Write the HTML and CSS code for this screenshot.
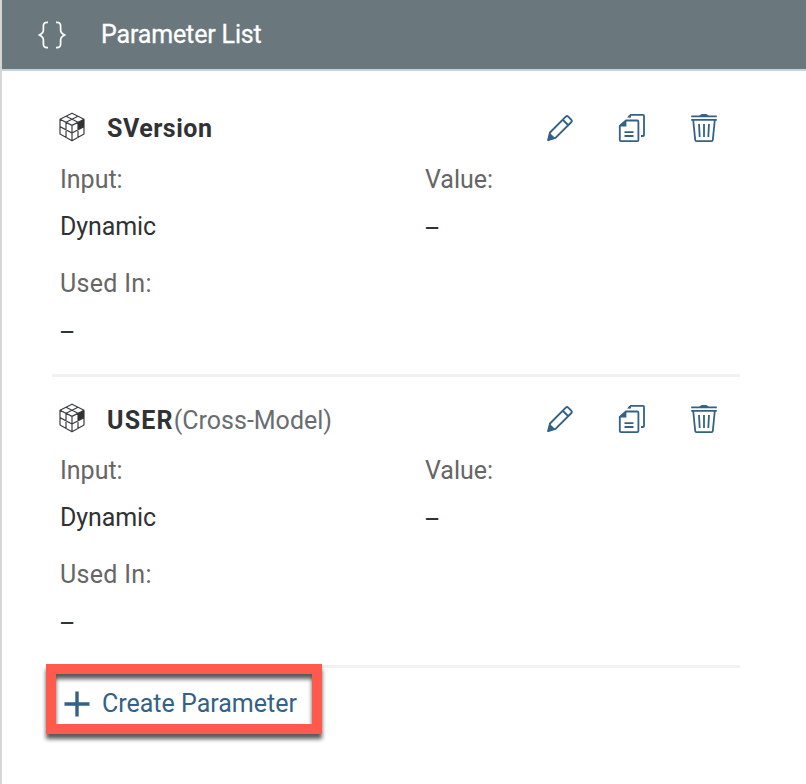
FILE: index.html
```html
<!DOCTYPE html>
<html lang="en">
<head>
<meta charset="utf-8">
<title>Parameter List</title>
<link rel="stylesheet" href="styles.css">
</head>
<body>
<svg class="defs" aria-hidden="true">
  <symbol id="cube" viewBox="0 0 28 30">
    <path d="M14 1.2 26 7.2V22L14 28.8 2 22V7.2ZM2 7.2 14 13.4 26 7.2M14 13.4V28.8M8 4.2 20 10.3V25.4M20 4.2 8 10.3V25.4M2 14.6 14 21 26 14.6" fill="none" stroke="#3c3f40" stroke-width="1.2" stroke-linejoin="round"/>
    <path d="M20 10.4 26 7.4V14.6L20 17.8Z" fill="#303233"/>
  </symbol>
  <symbol id="pencil" viewBox="0 0 28 28">
    <path d="M4 18.5 19.8 2.7Q21 1.5 22.2 2.7L25.4 5.9Q26.4 7 25.4 8L9.5 23.8 2.2 26ZM16.7 5.8 22.4 11.3" fill="none" stroke="currentColor" stroke-width="1.9" stroke-linejoin="round"/>
    <path d="M3.7 18.7 9.4 24.2 1.2 26.8Z" fill="currentColor"/>
  </symbol>
  <symbol id="copy" viewBox="0 0 28 30">
    <path d="M8 7.5H19.2Q20.4 7.5 20.4 8.7V27Q20.4 28.2 19.2 28.2H3Q1.8 28.2 1.8 27V13Z" fill="none" stroke="currentColor" stroke-width="1.8"/>
    <path d="M8.4 6.7V13.4H1V13Z" fill="currentColor"/>
    <path d="M10.5 4 13 1.8H25Q26 1.8 26 2.8V22Q26 23 25 23H23M6.5 19.2H15.5M6.5 23H15.5" fill="none" stroke="currentColor" stroke-width="1.8"/>
    <path d="M9 4.6 13 1V4.6Z" fill="currentColor"/>
  </symbol>
  <symbol id="trash" viewBox="0 0 28 30">
    <path d="M1.2 3.3H26.8M1.2 6.9H26.8M3.2 7 5.2 27Q5.3 28.2 6.5 28.2H21.5Q22.7 28.2 22.8 27L24.8 7M9 11 9.7 24M14 11V24M19 11 18.3 24" fill="none" stroke="currentColor" stroke-width="1.8"/>
    <path d="M8.8 3.4Q10.5 .9 12 .9H16Q17.5 .9 19.2 3.4Z" fill="currentColor"/>
  </symbol>
</svg>
<div class="panel">
  <header class="header">
    <svg class="braces" viewBox="0 0 28 28"><path d="M10 1.3H9Q5.4 1.3 5.4 5V9Q5.4 12 1.5 14 5.4 16 5.4 19V23Q5.4 26.6 9 26.6H10M18 1.3H19Q22.6 1.3 22.6 5V9Q22.6 12 26.5 14 22.6 16 22.6 19V23Q22.6 26.6 19 26.6H18" fill="none" stroke="#fff" stroke-width="1.7"/></svg>
    <h1 class="heading">Parameter List</h1>
  </header>
  <main class="list">
    <section class="card">
      <div class="title-row">
        <svg class="cube"><use href="#cube"/></svg>
        <h2 class="name"><span class="name-a">SVersion</span></h2>
        <div class="actions">
          <svg class="pencil"><use href="#pencil"/></svg>
          <svg class="icon"><use href="#copy"/></svg>
          <svg class="icon"><use href="#trash"/></svg>
        </div>
      </div>
      <dl class="fields">
        <div class="field"><dt>Input:</dt><dd>Dynamic</dd></div>
        <div class="field"><dt>Value:</dt><dd class="empty">–</dd></div>
        <div class="field"><dt class="used">Used In:</dt><dd class="empty">–</dd></div>
      </dl>
    </section>
    <section class="card">
      <div class="title-row">
        <svg class="cube"><use href="#cube"/></svg>
        <h2 class="name name-scoped"><span class="name-b">USER</span><span class="scope">(Cross-Model)</span></h2>
        <div class="actions">
          <svg class="pencil"><use href="#pencil"/></svg>
          <svg class="icon"><use href="#copy"/></svg>
          <svg class="icon"><use href="#trash"/></svg>
        </div>
      </div>
      <dl class="fields">
        <div class="field"><dt>Input:</dt><dd>Dynamic</dd></div>
        <div class="field"><dt>Value:</dt><dd class="empty">–</dd></div>
        <div class="field"><dt class="used">Used In:</dt><dd class="empty">–</dd></div>
      </dl>
    </section>
    <div class="create">
      <svg class="plus" viewBox="0 0 26 26"><path d="M13 .5V25.5M.5 13H25.5" stroke="currentColor" stroke-width="3.4"/></svg>
      <span>Create Parameter</span>
    </div>
  </main>
</div>
</body>
</html>
```
FILE: styles.css
```css
* { box-sizing: border-box; margin: 0; padding: 0; }
body {
  font: 25px/30px Roboto, "Liberation Sans", sans-serif;
  color: #32363a;
  background: #fff;
}
.defs { position: absolute; width: 0; height: 0; }
.panel { height: 784px; border-left: 2px solid #d6d6d6; overflow: hidden; }
.header {
  display: flex;
  align-items: center;
  height: 71px;
  padding-left: 36px;
  background: #6a777d;
  border-bottom: 2px solid #c3d2df;
  color: #fff;
}
.braces { width: 28px; height: 28px; }
.heading { margin-left: 35px; font-size: 25px; font-weight: 400; letter-spacing: -.15px; -webkit-text-stroke: .3px; }
.list { width: 688px; margin-left: 50px; padding-top: 15px; }
.card { height: 291px; padding: 16px 0 0 8px; border-bottom: 3px solid #f1f1f1; }
.title-row { display: flex; align-items: center; height: 52px; }
.cube { width: 28px; height: 30px; margin: -3px 0 0 -2px; }
.name { margin-left: 21px; padding-top: 2px; font-size: 25px; font-weight: 700; color: #303233; }
.name-scoped { padding-top: 4px; }
.name-a { letter-spacing: .5px; }
.name-b { letter-spacing: 1.2px; }
.scope { font-weight: 400; color: #6a6d70; }
.actions { display: flex; align-items: center; gap: 44px; margin: -1px 22px 0 auto; color: #346187; }
.icon { width: 28px; height: 30px; }
.pencil { width: 28px; height: 28px; }
.fields { display: grid; grid-template-columns: 365px 1fr; row-gap: 9px; }
dt { height: 52px; line-height: 52px; color: #666; }
.used { letter-spacing: .3px; }
dd { height: 43px; line-height: 41px; color: #303233; letter-spacing: -.1px; }
.empty { margin-left: -1px; line-height: 45px; }
.create {
  position: relative;
  display: flex;
  align-items: center;
  gap: 12px;
  width: 276px;
  height: 70px;
  margin: -4px 0 0 -6px;
  padding: 10px 0 0 18px;
  color: #346187;
}
.plus { width: 26px; height: 26px; }
.create::after {
  content: "";
  position: absolute;
  inset: 0;
  border: 10px solid #ff5a4d;
  filter: drop-shadow(0 5px 2px rgba(0, 0, 0, .65));
}
```
